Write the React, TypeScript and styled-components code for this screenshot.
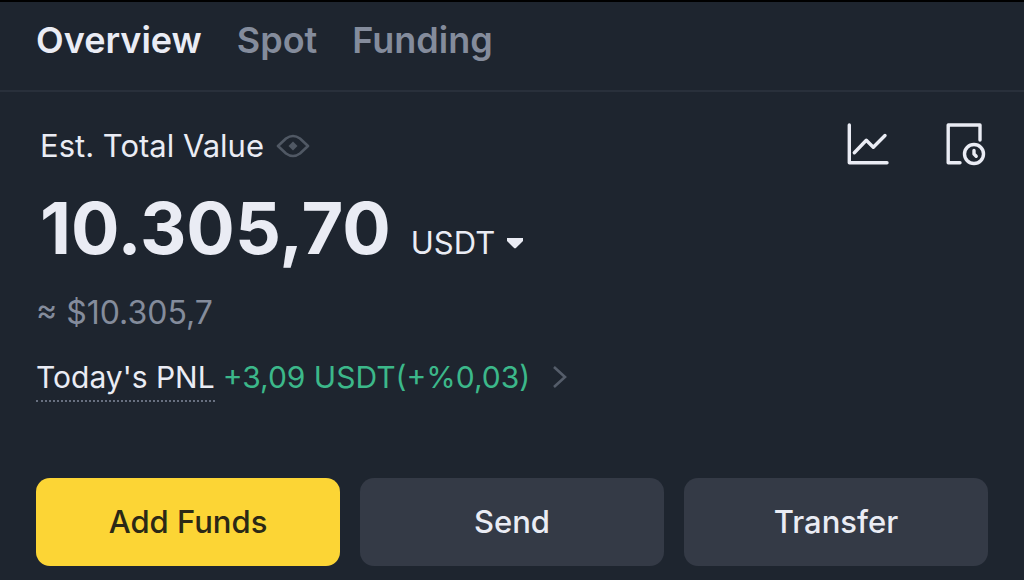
import React, { useState } from "react";
import styled, { createGlobalStyle } from "styled-components";

const GlobalStyle = createGlobalStyle`
  *, *::before, *::after { box-sizing: border-box; }
  body {
    margin: 0;
    background: #1e252f;
    color: #eaecf4;
    font-family: Inter, "Liberation Sans", sans-serif;
  }
  button, select { font: inherit; color: inherit; background: none; border: 0; padding: 0; margin: 0; cursor: pointer; }
`;

const Page = styled.main`
  border-top: 2px solid #000;
`;

const Tabs = styled.nav`
  display: flex;
  align-items: flex-start;
  gap: 35px;
  height: 90px;
  padding: 16px 36px 0;
  border-bottom: 2px solid #29303b;
`;

const Tab = styled.button<{ $active: boolean }>`
  font-size: 36px;
  line-height: 44px;
  font-weight: 600;
  color: ${(p) => (p.$active ? "#eaecf4" : "#848c9c")};
`;

const Wallet = styled.section`
  padding: 28px 36px 14px;
`;

const Row = styled.div`
  display: flex;
  align-items: center;
`;

const Heading = styled(Row)`
  gap: 12px;
  height: 52px;
  padding-left: 4px;
`;

const Label = styled.h1`
  margin: 0;
  font-size: 31px;
  line-height: 40px;
  font-weight: 400;
`;

const IconButton = styled.button`
  display: flex;
`;

const Tools = styled(Row)`
  gap: 56px;
  margin-left: auto;
`;

const Balance = styled(Row)`
  align-items: baseline;
  gap: 20px;
  padding: 10px 0 0 4px;
`;

const Amount = styled.strong`
  font-size: 72px;
  line-height: 92px;
  font-weight: 700;
`;

const Currency = styled.label`
  display: flex;
  align-items: center;
  gap: 10px;
  font-size: 31px;
  line-height: 40px;
`;

const CurrencySelect = styled.select`
  appearance: none;
  line-height: 40px;
`;

const Approx = styled.p`
  margin: 19px 0 0;
  font-size: 32px;
  line-height: 40px;
  color: #848c9c;
`;

const Profit = styled(Row)`
  align-items: flex-start;
  gap: 8px;
  margin-top: 24px;
  font-size: 30px;
  line-height: 40px;
`;

const ProfitLabel = styled.button`
  padding-bottom: 3px;
  border-bottom: 2px dotted #687080;
`;

const ProfitLink = styled.a`
  display: flex;
  align-items: center;
  gap: 22px;
  color: #3cb88a;
  text-decoration: none;
`;

const Actions = styled.div`
  display: grid;
  grid-template-columns: repeat(3, 1fr);
  gap: 20px;
  margin-top: 76px;
`;

const Action = styled.button<{ $primary?: boolean }>`
  height: 88px;
  border-radius: 14px;
  font-size: 31px;
  line-height: 40px;
  font-weight: 500;
  background: ${(p) => (p.$primary ? "#fcd535" : "#343a46")};
  color: ${(p) => (p.$primary ? "#2b2816" : "#eaecf4")};
`;

const EyeIcon = () => (
  <svg width="34" height="24" viewBox="0 0 34 24" fill="none" aria-hidden="true">
    <path d="M2 12 10 4.500Q17-.5 24 4.500L32 12 24 19.500Q17 24.500 10 19.500Z" stroke="#505864" strokeWidth="2.6" strokeLinejoin="round" />
    <path d="m17 7.500 4.500 4.500-4.500 4.500-4.500-4.500Z" fill="#505864" />
  </svg>
);

const ChartIcon = () => (
  <svg width="44" height="48" viewBox="0 0 44 48" fill="none" stroke="#eaecf4" strokeWidth="3.4" strokeLinecap="round" strokeLinejoin="round" aria-hidden="true">
    <path d="M3.300 3v37.700H41" />
    <path d="m8.300 30.700 12-12.400 7 7L39 13.500" />
  </svg>
);

const HistoryIcon = () => (
  <svg width="42" height="48" viewBox="0 0 42 48" fill="none" stroke="#eaecf4" strokeWidth="3.400" strokeLinecap="round" strokeLinejoin="round" aria-hidden="true">
    <path d="M14 40.700H2.200V3H34v15" />
    <circle cx="28" cy="32" r="9.500" />
    <path d="M28 28.500V32l2.200 2.200" />
  </svg>
);

const CaretIcon = () => (
  <svg width="18" height="12" viewBox="0 0 18 12" aria-hidden="true">
    <path d="M1 1h16v3L9.700 11.300h-1.400L1 4Z" fill="#eaecf4" />
  </svg>
);

const ChevronIcon = () => (
  <svg width="16" height="24" viewBox="0 0 16 24" fill="none" stroke="#555d6a" strokeWidth="2.600" aria-hidden="true">
    <path d="m2 2 11 10L2 22" />
  </svg>
);

const tabs = ["Overview", "Spot", "Funding"];

export default function App() {
  const [active, setActive] = useState("Overview");
  return (
    <>
      <GlobalStyle />
      <Page>
        <Tabs aria-label="Wallet">
          {tabs.map((t) => (
            <Tab key={t} type="button" $active={t === active} aria-current={t === active ? "page" : undefined} onClick={() => setActive(t)}>
              {t}
            </Tab>
          ))}
        </Tabs>
        <Wallet>
          <Heading>
            <Label>Est. Total Value</Label>
            <IconButton type="button" aria-label="Hide balance"><EyeIcon /></IconButton>
            <Tools>
              <IconButton type="button" aria-label="Analysis"><ChartIcon /></IconButton>
              <IconButton type="button" aria-label="History"><HistoryIcon /></IconButton>
            </Tools>
          </Heading>
          <Balance>
            <Amount>10.305,70</Amount>
            <Currency>
              <CurrencySelect aria-label="Currency" defaultValue="USDT">
                <option>USDT</option>
              </CurrencySelect>
              <CaretIcon />
            </Currency>
          </Balance>
          <Approx>≈ $10.305,7</Approx>
          <Profit>
            <ProfitLabel type="button">Today's PNL</ProfitLabel>
            <ProfitLink href="#pnl">
              +3,09 USDT(+%0,03)
              <ChevronIcon />
            </ProfitLink>
          </Profit>
          <Actions>
            <Action type="button" $primary>Add Funds</Action>
            <Action type="button">Send</Action>
            <Action type="button">Transfer</Action>
          </Actions>
        </Wallet>
      </Page>
    </>
  );
}
